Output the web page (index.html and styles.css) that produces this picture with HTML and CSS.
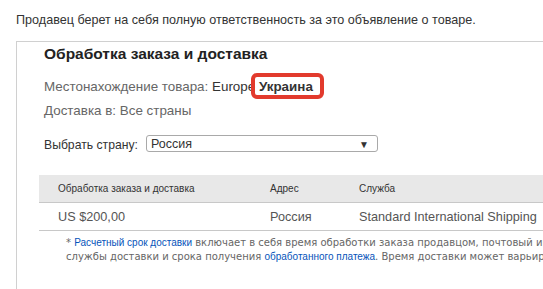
FILE: index.html
```html
<!DOCTYPE html>
<html lang="ru">
<head>
  <meta charset="UTF-8">
  <meta name="viewport" content="width=device-width, initial-scale=1.0">
  <title>Обработка заказа и доставка</title>
  <link rel="stylesheet" href="styles.css">
</head>
<body>
  <p class="notice">Продавец берет на себя полную ответственность за это объявление о товаре.</p>

  <div class="shipping">
    <div class="intro">
      <h2>Обработка заказа и доставка</h2>
      <div class="loc">Местонахождение товара: <span class="val">Europe</span> <b class="mark">Украина</b></div>
      <div class="ship-to">Доставка в: Все страны</div>
      <div class="country">
        <label for="country">Выбрать страну:</label>
        <div class="select-wrap">
          <select id="country">
            <option>Россия</option>
            <option>Украина</option>
            <option>Беларусь</option>
          </select>
        </div>
      </div>
    </div>

    <table class="rates">
      <thead>
        <tr>
          <th class="c1">Обработка заказа и доставка</th>
          <th class="c2">Адрес</th>
          <th>Служба</th>
        </tr>
      </thead>
      <tbody>
        <tr>
          <td>US $200,00</td>
          <td>Россия</td>
          <td>Standard International Shipping</td>
        </tr>
      </tbody>
    </table>

    <p class="footnote">* <a href="#">Расчетный срок доставки</a> включает в себя время обработки заказа продавцом, почтовый индекс отправления, почтовый индекс получения, тип<br>службы доставки и срока получения <a href="#">обработанного платежа</a>. Время доставки может варьироваться, особенно в пиковые периоды.</p>
  </div>
</body>
</html>
```

FILE: styles.css
```css
body {
  font-family: "Liberation Sans", Arial, sans-serif;
  background: #fff;
  color: #333;
  margin: 0;
  padding: 0;
  overflow: hidden;
}

.notice {
  margin: 0;
  padding: 12px 16px 0;
  font-size: 12.6px;
  line-height: 16px;
  color: #333;
}

.shipping {
  margin: 13px 0 0 16px;
  width: 760px;
  border-top: 1px solid #d0d0d0;
  border-left: 1px solid #d0d0d0;
  padding: 2px 0 60px 22px;
}

.intro {
  padding-left: 5px;
  font-size: 13.4px;
  line-height: 16px;
  color: #666;
}

.intro h2 {
  margin: 0;
  font-size: 15.5px;
  line-height: 20px;
  color: #222;
}

.loc {
  margin-top: 15px;
}

.loc .val {
  color: #333;
}

.mark {
  position: relative;
  color: #333;
}

.mark::after {
  content: "";
  position: absolute;
  left: -8px;
  right: -11px;
  top: -6px;
  bottom: -5px;
  border: 4px solid #e23a2d;
  border-radius: 6px;
}

.ship-to {
  margin-top: 8px;
}

.country {
  display: flex;
  align-items: center;
  gap: 8px;
  margin-top: 15px;
  font-size: 12.2px;
  color: #333;
}

.country label {
  padding-top: 3px;
}

.select-wrap {
  position: relative;
  width: 232px;
}

.select-wrap select {
  appearance: none;
  -webkit-appearance: none;
  width: 100%;
  height: 17px;
  padding: 0 0 0 4px;
  border: 1px solid #a9a9a9;
  border-radius: 3px;
  background: #fff;
  font-family: "Liberation Sans", Arial, sans-serif;
  font-size: 12.5px;
  color: #333;
}

.select-wrap::after {
  content: "▼";
  position: absolute;
  right: 9px;
  top: 2px;
  font-size: 10px;
  color: #333;
  pointer-events: none;
}

.rates {
  margin-top: 22px;
  border-collapse: collapse;
  table-layout: fixed;
  width: 100%;
}

.rates th,
.rates td {
  text-align: left;
  padding: 0 0 0 19px;
  height: 27px;
  white-space: nowrap;
}

.rates th {
  background: #e8e8e8;
  font-size: 10px;
  font-weight: normal;
  color: #333;
  border-bottom: 1px solid #c8c8c8;
}

.rates td {
  font-size: 12.7px;
  color: #555;
  border-bottom: 1px solid #c8c8c8;
}

.rates .c1 {
  width: 193px;
}

.rates .c2 {
  width: 70px;
}

.footnote {
  margin: 5px 0 0;
  padding-left: 27px;
  font-family: "DejaVu Sans", Verdana, sans-serif;
  font-size: 10px;
  line-height: 14px;
  color: #666;
  white-space: nowrap;
}

.footnote a {
  font-family: "Liberation Sans", Arial, sans-serif;
  font-size: 10px;
  color: #0654ba;
  text-decoration: none;
}
```
